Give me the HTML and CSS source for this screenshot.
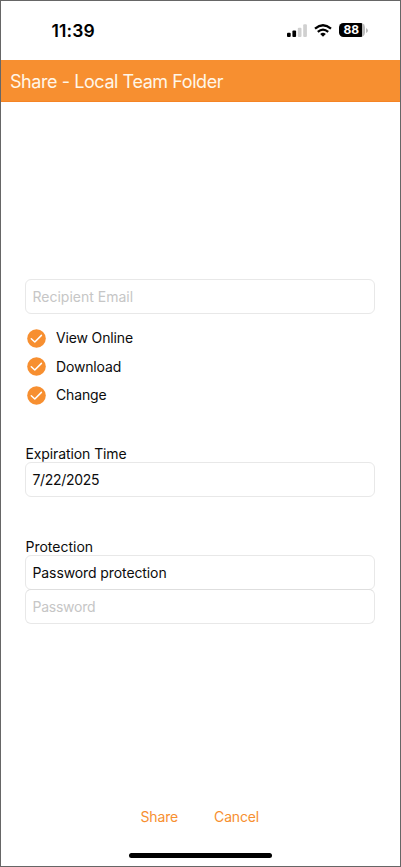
FILE: index.html
```html
<!DOCTYPE html>
<html lang="en">
<head>
<meta charset="utf-8">
<title>Share - Local Team Folder</title>
<link rel="stylesheet" href="styles.css">
</head>
<body>
<div class="screen">
  <div class="status">
    <span class="time">11:39</span>
    <svg class="signal" width="20" height="13" viewBox="0 0 20 13"><rect x="0" y="8.7" width="3.7" height="4.2" rx="1"/><rect x="5.4" y="6.5" width="3.7" height="6.4" rx="1"/><g fill="#d0d0d0"><rect x="10.8" y="3.7" width="3.7" height="9.2" rx="1"/><rect x="16.2" y="0.3" width="3.7" height="12.6" rx="1"/></g></svg>
    <svg class="wifi" width="18" height="13" viewBox="0 0 18 13" fill="none" stroke="#000" stroke-width="2.2"><path d="M1 4.6Q9-2.1 17 4.6M3.8 7.8Q9 3.4 14.2 7.8"/><path d="M6.2 9.9Q9 7.7 11.8 9.9L9 12.8Z" fill="#000" stroke="none"/></svg>
    <div class="battery">88</div>
    <svg class="nub" width="2" height="5" viewBox="0 0 2 5"><path d="M0 0Q2 1 2 2.5T0 5Z" fill="#bbb"/></svg>
  </div>
  <header class="bar"><h1>Share - Local Team Folder</h1></header>
  <main class="form">
    <div class="field hint email">Recipient Email</div>
    <ul class="options">
      <li><svg width="19" height="19" viewBox="0 0 19 19"><circle cx="9.5" cy="9.5" r="9.3"/><path d="M4.3 9.8L7.8 13L14.4 6.4"/></svg><span>View Online</span></li>
      <li><svg width="19" height="19" viewBox="0 0 19 19"><circle cx="9.5" cy="9.5" r="9.3"/><path d="M4.3 9.8L7.8 13L14.4 6.4"/></svg><span>Download</span></li>
      <li><svg width="19" height="19" viewBox="0 0 19 19"><circle cx="9.5" cy="9.5" r="9.3"/><path d="M4.3 9.8L7.8 13L14.4 6.4"/></svg><span>Change</span></li>
    </ul>
    <div class="label first">Expiration Time</div>
    <div class="field date">7/22/2025</div>
    <div class="label second">Protection</div>
    <div class="field">Password protection</div>
    <div class="field hint joined">Password</div>
  </main>
  <footer class="actions"><span>Share</span><span>Cancel</span></footer>
  <div class="home"></div>
</div>
</body>
</html>
```
FILE: styles.css
```css
* { box-sizing: border-box; }
body { margin: 0; background: #fff; color: #0c0c0c; font-family: Inter, sans-serif; font-size: 14px; letter-spacing: -0.1px; }
.screen { width: 401px; height: 867px; border: 1px solid #666; display: flex; flex-direction: column; overflow: hidden; }
.status { height: 59px; flex: none; display: flex; align-items: center; padding-left: 50.5px; }
.time { width: 235.5px; font-size: 17.5px; font-weight: 600; letter-spacing: 0.15px; color: #000; }
.signal, .wifi, .battery, .nub { position: relative; top: -0.5px; }
.wifi { margin-left: 7px; }
.battery { width: 26px; height: 14px; margin-left: 7px; border-radius: 4.5px; background: linear-gradient(90deg, #000 23px, #bbb 23px); color: #fff; font-size: 12px; line-height: 14px; font-weight: 700; letter-spacing: 0; padding-left: 4.5px; }
.nub { margin-left: 0.5px; }
.bar { height: 42px; flex: none; background: #f78f30; border-bottom: 1px solid #f58425; display: flex; align-items: center; padding: 2px 0 0 9px; }
h1 { margin: 0; font-size: 18px; font-weight: 400; letter-spacing: -0.43px; color: #fff6e8; }
.form { padding: 177px 25px 0 24px; }
.field { height: 35px; border: 1px solid #e8e8e8; border-radius: 6px; display: flex; align-items: center; padding-left: 6.5px; }
.hint { color: #c6c6c6; }
.email { letter-spacing: 0; }
.date { letter-spacing: -0.3px; }
.joined { margin-top: -1px; border-top-color: #dedede; letter-spacing: -0.25px; }
.options { list-style: none; margin: 10px 0 0; padding: 0 0 0 2px; }
.options li { height: 28.5px; display: flex; align-items: center; gap: 10px; }
.options span { margin-top: -1px; letter-spacing: -0.15px; }
.options circle { fill: #f78f30; }
.options path { fill: none; stroke: #fff; stroke-width: 1.5; stroke-linecap: round; stroke-linejoin: round; }
.label { line-height: 17px; padding-left: 0.5px; }
.first { margin-top: 35.5px; }
.second { margin-top: 41px; letter-spacing: 0; }
.actions { margin-top: auto; display: flex; gap: 36px; padding-left: 139.5px; line-height: 18px; letter-spacing: -0.15px; color: #f78f30; }
.home { width: 143px; height: 5px; flex: none; margin: 27px 0 8px 128px; border-radius: 3px; background: #000; }
```
